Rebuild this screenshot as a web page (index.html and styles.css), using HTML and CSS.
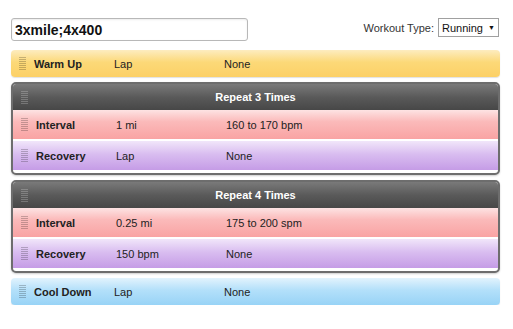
FILE: index.html
```html
<!DOCTYPE html>
<html lang="en">
<head>
    <meta charset="UTF-8">
    <title>Workout Builder</title>
    <link rel="stylesheet" href="styles.css">
</head>
<body>

    <div class="page">
        <div class="top-bar">
            <input class="workout-input" type="text" value="3xmile;4x400">
            <div class="type-select">
                <label>Workout Type:</label>
                <div class="select-box">Running <span class="arrow">&#9660;</span></div>
            </div>
        </div>

        <div class="step warmup">
            <span class="grip"></span>
            <span class="name">Warm Up</span>
            <span class="col dur">Lap</span>
            <span class="col target">None</span>
        </div>

        <div class="repeat">
            <div class="repeat-head">
                <span class="grip"></span>
                <span class="repeat-title">Repeat 3 Times</span>
            </div>
            <div class="step interval">
                <span class="grip"></span>
                <span class="name">Interval</span>
                <span class="col dur">1 mi</span>
                <span class="col target">160 to 170 bpm</span>
            </div>
            <div class="step recovery">
                <span class="grip"></span>
                <span class="name">Recovery</span>
                <span class="col dur">Lap</span>
                <span class="col target">None</span>
            </div>
        </div>

        <div class="repeat">
            <div class="repeat-head">
                <span class="grip"></span>
                <span class="repeat-title">Repeat 4 Times</span>
            </div>
            <div class="step interval">
                <span class="grip"></span>
                <span class="name">Interval</span>
                <span class="col dur">0.25 mi</span>
                <span class="col target">175 to 200 spm</span>
            </div>
            <div class="step recovery">
                <span class="grip"></span>
                <span class="name">Recovery</span>
                <span class="col dur">150 bpm</span>
                <span class="col target">None</span>
            </div>
        </div>

        <div class="step cooldown">
            <span class="grip"></span>
            <span class="name">Cool Down</span>
            <span class="col dur">Lap</span>
            <span class="col target">None</span>
        </div>
    </div>

</body>
</html>
```

FILE: styles.css
```css
body {
    margin: 0;
    padding: 0;
    background: #fff;
    font-family: "Liberation Sans", Arial, sans-serif;
    font-size: 11px;
    color: #222;
}

.page {
    width: 489px;
    margin-left: 11px;
    padding-top: 18px;
    display: flex;
    flex-direction: column;
    gap: 5px;
}

.top-bar {
    display: flex;
    justify-content: space-between;
    align-items: flex-start;
    margin-bottom: 4px;
}

.workout-input {
    width: 229px;
    height: 17px;
    padding: 2px 3px;
    border: 1px solid #b8b8b8;
    border-radius: 3px;
    font-family: "Liberation Sans", Arial, sans-serif;
    font-size: 14px;
    font-weight: bold;
    color: #111;
    box-shadow: inset 0 1px 2px rgba(0, 0, 0, 0.08);
}

.type-select {
    display: flex;
    align-items: center;
    gap: 4px;
    margin-right: 1px;
}

.type-select label {
    color: #333;
}

.select-box {
    border: 1px solid #a0a0a0;
    padding: 2px 3px 2px 3px;
    height: 13px;
    line-height: 13px;
    background: #fff;
    color: #111;
}

.arrow {
    font-size: 7px;
    vertical-align: 2px;
    margin-left: 2px;
}

.step {
    display: flex;
    align-items: center;
    height: 27px;
    border-radius: 4px;
}

.grip {
    width: 7px;
    height: 13px;
    margin-left: 8px;
    margin-right: 8px;
    background: repeating-linear-gradient(to bottom, rgba(0, 0, 0, 0.22) 0 1px, transparent 1px 2px);
}

.name {
    width: 80px;
    font-weight: bold;
}

.col.dur {
    width: 110px;
}

.warmup {
    background: linear-gradient(to bottom, #fdecc0 0%, #fcd978 45%, #fcd066 100%);
    box-shadow: 0 1px 1px rgba(0, 0, 0, 0.12);
}

.cooldown {
    background: linear-gradient(to bottom, #e2f3fd 0%, #b3e0fa 45%, #98d3f6 100%);
    box-shadow: 0 1px 1px rgba(0, 0, 0, 0.12);
}

.repeat {
    border: 2px solid #6d6d6d;
    border-radius: 5px;
    overflow: hidden;
    background: #fff;
    display: flex;
    flex-direction: column;
    gap: 2px;
    padding-bottom: 3px;
    box-shadow: 0 1px 2px rgba(0, 0, 0, 0.2);
}

.repeat-head {
    display: flex;
    align-items: center;
    height: 26px;
    background: linear-gradient(to bottom, #7a7a7a 0%, #5a5a5a 50%, #474747 100%);
    margin-bottom: -2px;
}

.repeat-head .grip {
    background: repeating-linear-gradient(to bottom, rgba(255, 255, 255, 0.22) 0 1px, transparent 1px 2px);
}

.repeat-title {
    flex: 1;
    text-align: center;
    color: #fff;
    font-weight: bold;
    margin-right: 23px;
}

.repeat .step {
    border-radius: 0;
    height: 29px;
}

.interval {
    background: linear-gradient(to bottom, #fde3e3 0%, #fbbaba 40%, #f9a3a3 100%);
}

.recovery {
    background: linear-gradient(to bottom, #f1e6fa 0%, #d9bdf0 45%, #c59ce6 100%);
}
```
